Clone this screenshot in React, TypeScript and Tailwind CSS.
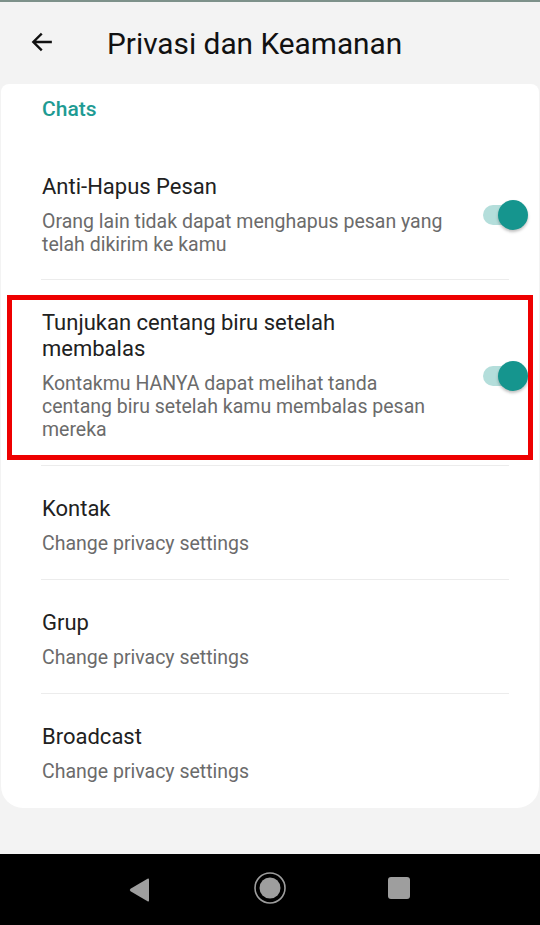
import React from "react";

function Toggle() {
  return (
    <div className="relative w-[50px] h-[32px] shrink-0">
      <div className="absolute left-[3px] top-[6px] w-[40px] h-[20px] rounded-full bg-[#b4dedb]" />
      <div className="absolute right-[2px] top-[1px] w-[30px] h-[30px] rounded-full bg-[#15958e] shadow-[0_2px_3px_rgba(0,0,0,0.25)]" />
    </div>
  );
}

function Row({
  title,
  sub,
  toggle,
  divider = true,
  pt = "pt-[30px]",
  pb = "pb-[24px]",
}: {
  title: React.ReactNode;
  sub: React.ReactNode;
  toggle?: boolean;
  divider?: boolean;
  pt?: string;
  pb?: string;
}) {
  return (
    <div className={`ml-[40px] mr-[30px] flex items-center ${pt} ${pb} ${divider ? "border-b border-[#ececec]" : ""}`}>
      <div className="flex-1 pl-[1px] whitespace-nowrap">
        <div className="text-[22px] leading-[26px] text-[#212121]">{title}</div>
        <div className="mt-[10px] text-[19.5px] leading-[23px] text-[#6b6b6b]">{sub}</div>
      </div>
      {toggle && <div className="mr-[-21px]"><Toggle /></div>}
    </div>
  );
}

export default function App() {
  return (
    <div className="w-[540px] h-[925px] bg-[#f3f3f3] flex flex-col overflow-hidden" style={{ fontFamily: "Roboto, 'Noto Sans', sans-serif" }}>
      <div className="h-[2px] bg-[#7d918a]" />
      <div className="h-[82px] flex items-center">
        <div className="w-[107px] pl-[29px] pb-[2px]">
          <svg width="26" height="26" viewBox="0 0 24 24" fill="none" stroke="#111" strokeWidth="2.2" strokeLinecap="square">
            <path d="M20 12H5M11 5l-7 7 7 7" />
          </svg>
        </div>
        <div className="text-[29.8px] leading-[34px] text-[#111] pt-[1px]">Privasi dan Keamanan</div>
      </div>
      <div className="relative mx-[1px] bg-white rounded-t-[8px] rounded-b-[22px] pt-[13px] pb-[24px]">
        <div className="px-[41px] text-[21px] leading-[24px] font-medium text-[#1e9b93]">Chats</div>
        <Row
          pt="pt-[53px]"
          pb="pb-[23px]"
          title="Anti-Hapus Pesan"
          sub={<>Orang lain tidak dapat menghapus pesan yang<br />telah dikirim ke kamu</>}
          toggle
        />
        <Row
          pt="pt-[30px]"
          pb="pb-[24px]"
          title={<>Tunjukan centang biru setelah<br />membalas</>}
          sub={<>Kontakmu HANYA dapat melihat tanda<br />centang biru setelah kamu membalas pesan<br />mereka</>}
          toggle
        />
        <Row title="Kontak" sub="Change privacy settings" />
        <Row title="Grup" sub="Change privacy settings" />
        <Row title="Broadcast" sub="Change privacy settings" divider={false} pb="pb-[1px]" />
        <div className="absolute left-[6px] top-[211px] w-[526px] h-[165px] border-[5px] border-[#ee0000]" />
      </div>
      <div className="flex-1" />
      <div className="h-[71px] bg-black flex items-center">
        <div className="relative w-full h-full">
          <svg className="absolute left-[128px] top-[23px]" width="24" height="26" viewBox="0 0 24 26">
            <path d="M21 2.5 L21 23.5 Q21 25 19.5 24.2 L2.5 14.2 Q1 13 2.5 11.8 L19.5 1.8 Q21 1 21 2.5Z" fill="#9e9e9e" />
          </svg>
          <svg className="absolute left-[254px] top-[18px]" width="32" height="32" viewBox="0 0 32 32">
            <circle cx="16" cy="16" r="15" fill="none" stroke="#9e9e9e" strokeWidth="1.6" />
            <circle cx="16" cy="16" r="10.5" fill="#9e9e9e" />
          </svg>
          <div className="absolute left-[388px] top-[23px] w-[22px] h-[22px] rounded-[3px] bg-[#9e9e9e]" />
        </div>
      </div>
    </div>
  );
}
